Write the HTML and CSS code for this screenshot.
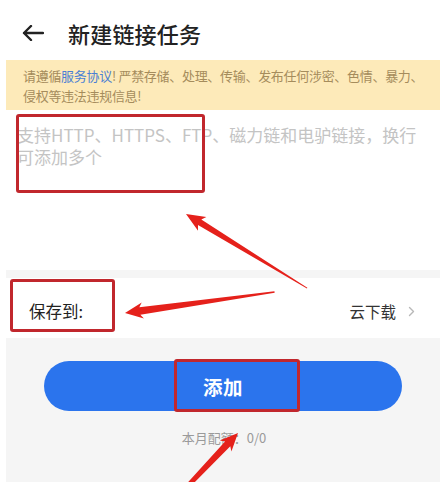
FILE: index.html
```html
<!DOCTYPE html>
<html lang="zh-CN">
<head>
<meta charset="utf-8">
<title>新建链接任务</title>
<link rel="stylesheet" href="styles.css">
</head>
<body>
<div class="page">
  <header class="header">
    <svg class="back" width="22" height="16" viewBox="0 0 22 16">
      <path d="M21 8H2M9 1L2 8l7 7" fill="none" stroke="#222" stroke-width="2.4" stroke-linecap="round" stroke-linejoin="round"/>
    </svg>
    <h1 class="title">新建链接任务</h1>
  </header>

  <div class="notice">
    <div class="notice-line">请遵循<a class="link">服务协议</a>! 严禁存储、处理、传输、发布任何涉密、色情、暴力、</div>
    <div class="notice-line">侵权等违法违规信息!</div>
  </div>

  <div class="input-area">
    <div class="placeholder">支持HTTP、HTTPS、FTP、磁力链和电驴链接，换行可添加多个</div>
  </div>

  <div class="gap"></div>

  <div class="row">
    <span class="row-label">保存到:</span>
    <span class="row-value">云下载
      <svg class="chev" width="7" height="11" viewBox="0 0 7 11"><path d="M1.5 1.5L5.5 5.5 1.5 9.5" fill="none" stroke="#b8b8b8" stroke-width="1.4" stroke-linecap="round" stroke-linejoin="round"/></svg>
    </span>
  </div>

  <div class="bottom">
    <button class="add-btn">添加</button>
    <div class="quota">本月配额：0/0</div>
  </div>
</div>

<div class="mark mark-input"></div>
<div class="mark mark-save"></div>
<div class="mark mark-btn"></div>

<svg class="arrows" width="446" height="482" viewBox="0 0 446 482">
  <g fill="#e5211b">
    <polygon transform="translate(186 214) rotate(211.45)" points="0,0 -19,-8 -16,-3.2 -142,-0.4 -142,0.4 -16,3.2 -19,8"/>
    <polygon transform="translate(125 313) rotate(172.03)" points="0,0 -18,-8 -15,-3.8 -151,-0.8 -151,0.8 -15,3.8 -18,8"/>
    <polygon transform="translate(238 433) rotate(-46.5)" points="0,0 -18,-8 -15,-3.6 -110,-1.5 -110,1.5 -15,3.6 -18,8"/>
  </g>
</svg>
</body>
</html>
```

FILE: styles.css
```css
* { box-sizing: border-box; }

html, body {
  margin: 0;
  padding: 0;
  background: #ffffff;
}

body {
  width: 446px;
  height: 482px;
  overflow: hidden;
  position: relative;
  font-family: "Noto Sans CJK SC", "Noto Sans", sans-serif;
  color: #222;
}

.page {
  margin: 0 6px 0 6px;
  width: 434px;
  height: 482px;
  display: flex;
  flex-direction: column;
}

.header {
  height: 60px;
  display: flex;
  align-items: center;
  padding: 6px 0 0 16px;
}

.back {
  display: block;
  flex: none;
}

.title {
  margin: 0 0 0 24px;
  font-size: 22px;
  font-weight: 500;
  color: #222;
  line-height: 28px;
  letter-spacing: 0.2px;
}

.notice {
  height: 50px;
  background: #fdeab9;
  color: #a58c5c;
  font-size: 13px;
  letter-spacing: -0.3px;
  line-height: 20px;
  padding: 6px 8px 0 17px;
}

.notice-line {
  white-space: nowrap;
}

.link { color: #4b7fd4; text-decoration: none; }

.input-area {
  height: 160px;
  padding: 14px 14px 0 11px;
}

.placeholder {
  font-size: 17px;
  line-height: 22px;
  color: #c4c4c4;
}

.gap {
  height: 8px;
  background: #f5f5f5;
}

.row {
  height: 60px;
  display: flex;
  align-items: center;
  justify-content: space-between;
  padding: 6px 25px 0 23px;
}

.row-label {
  font-size: 16.5px;
  color: #222;
}

.row-value {
  display: flex;
  align-items: center;
  font-size: 15.5px;
  color: #333;
}

.chev {
  margin-left: 12px;
  display: block;
}

.bottom {
  flex: 1;
  background: #f5f5f5;
  display: flex;
  flex-direction: column;
  align-items: center;
  padding-top: 23px;
}

.add-btn {
  width: 358px;
  height: 50px;
  border: none;
  border-radius: 25px;
  background: #2b74ed;
  color: #fff;
  font-family: "Noto Sans CJK SC", sans-serif;
  font-size: 19.5px;
  font-weight: 700;
  letter-spacing: 0.5px;
  padding: 0;
}

.quota {
  margin-top: 18px;
  font-size: 13px;
  line-height: 18px;
  color: #9a9a9a;
  padding-left: 2px;
}

.mark {
  position: absolute;
  border: 3px solid #c1272d;
  border-radius: 3px;
}

.mark-input { left: 16px; top: 114px; width: 189px; height: 79px; }
.mark-save  { left: 10px; top: 279px; width: 105px; height: 53px; }
.mark-btn   { left: 174px; top: 359px; width: 126px; height: 53px; }

.arrows {
  position: absolute;
  left: 0;
  top: 0;
  pointer-events: none;
}
```
